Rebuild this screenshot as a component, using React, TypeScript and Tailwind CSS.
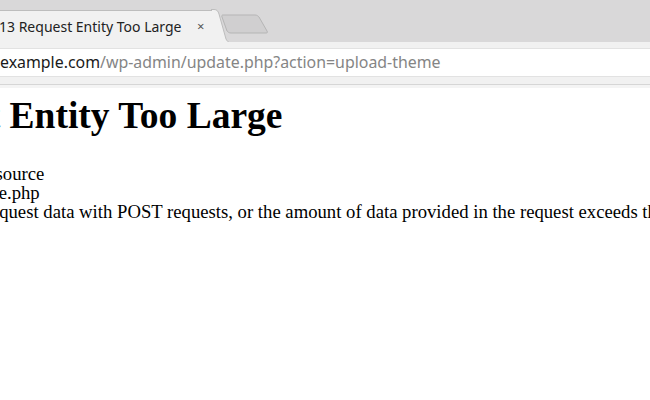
import React from 'react'

export default function App() {
    return (
        <div className="w-[650px] h-[400px] overflow-hidden bg-white">
            {/* Tab strip */}
            <div className="h-[42px] bg-[#d9d8d9] flex items-end overflow-hidden">
                <div className="relative h-[32px] w-[212px] shrink-0 bg-[#f1f1f1] border-t border-[#bdbdbd] flex items-center">
                    <span className="-ml-[9px] whitespace-nowrap text-[14px] text-[#222] [font-family:'DejaVu Sans',sans-serif]">
                        413 Request Entity Too Large
                    </span>
                    <span className="absolute left-[197px] top-[6px] text-[13px] text-[#555] [font-family:'DejaVu Sans',sans-serif]">×</span>
                </div>
                <svg width="18" height="33" viewBox="0 0 18 33" className="shrink-0 -ml-px">
                    <path d="M0 0.5 L3 0.5 C6 0.5 7 2 8 5 L15 30 C16 32 17 33 18 33 L0 33 Z" fill="#f1f1f1" />
                    <path d="M0 0.5 L3 0.5 C6 0.5 7 2 8 5 L15 30 C16 32 17 33 18 33" fill="none" stroke="#bdbdbd" />
                </svg>
                <svg width="48" height="20" viewBox="0 0 48 20" className="shrink-0 -ml-[8px] mb-[8px]">
                    <path d="M2 1 L34 1 C36 1 37 2 38 3 L46 17 C47 19 46 19 44 19 L10 19 C8 19 7 18 6 17 L1 3 C0.5 1.5 1 1 2 1 Z" fill="#d0cfd0" stroke="#b5b5b5" />
                </svg>
            </div>

            {/* Address bar */}
            <div className="h-[43px] bg-[#f1f1f1] border-b border-[#d6d6d6] pt-[6px] pb-[7px]">
                <div className="h-full bg-white border-y border-[#e2e2e2] flex items-center whitespace-nowrap text-[15.9px] [font-family:'DejaVu Sans',sans-serif]">
                    <span className="text-[#1a1a1a]">example.com</span>
                    <span className="text-[#858585]">/wp-admin/update.php?action=upload-theme</span>
                </div>
            </div>
            <div className="h-[3px] bg-[#f4f4f4]" />

            {/* Page body */}
            <div className="-ml-[129px] whitespace-nowrap text-black [font-family:'Liberation_Serif',serif]">
                <h1 className="mt-[8px] text-[37.5px] font-bold leading-[40px]">Request Entity Too Large</h1>
                <p className="mt-[28px] text-[18.7px] leading-[19px]">
                    The requested resource<br />
                    /wp-admin/update.php<br />
                    does not allow request data with POST requests, or the amount of data provided in the request exceeds the capacity limit.
                </p>
            </div>
        </div>
    )
}
